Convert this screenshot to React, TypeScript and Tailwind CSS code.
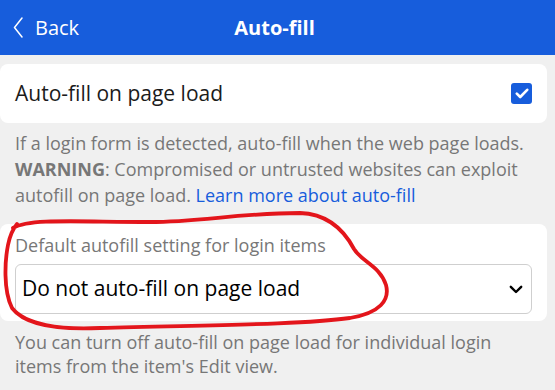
import React from "react";

export default function App() {
  return (
    <div
      className="relative w-[555px] h-[390px] overflow-hidden bg-[#f0f0f0]"
      style={{ fontFamily: '"Open Sans", "Noto Sans", sans-serif' }}
    >
      <header className="relative h-[55px] bg-[#175ddc] text-white flex items-center">
        <div className="flex items-center pl-[13px] gap-[12px]">
          <svg width="10" height="21" viewBox="0 0 10 21" fill="none">
            <path d="M9 1 L1.5 10.5 L9 20" stroke="white" strokeWidth="1.5" strokeLinecap="round" strokeLinejoin="round" />
          </svg>
          <span className="text-[20px] leading-none">Back</span>
        </div>
        <div className="absolute inset-0 flex items-center justify-center pointer-events-none">
          <span className="text-[20px] font-bold leading-none pr-[6px]">Auto-fill</span>
        </div>
      </header>

      <main className="pr-[8px] pt-[9px]">
        <div className="h-[59px] rounded-[8px] bg-white flex items-center justify-between pl-[15px] pr-[15px]">
          <span className="text-[21px] text-[#1b1b1b]">Auto-fill on page load</span>
          <div className="w-[21px] h-[21px] rounded-[3px] bg-[#175ddc] flex items-center justify-center">
            <svg width="14" height="11" viewBox="0 0 14 11" fill="none">
              <path d="M1.8 5.6 L5.2 9 L12.2 1.8" stroke="white" strokeWidth="2.6" strokeLinecap="round" strokeLinejoin="round" />
            </svg>
          </div>
        </div>

        <p className="mt-[7px] px-[15px] text-[18px] leading-[26px] text-[#777777]">
          If a login form is detected, auto-fill when the web page loads.{" "}
          <span className="font-bold">WARNING</span>: Compromised or untrusted websites can exploit autofill on page
          load. <span className="text-[#175ddc]">Learn more about auto-fill</span>
        </p>

        <div className="mt-[16px] rounded-[8px] bg-white px-[15px] pt-[10px] pb-[7px]">
          <div className="text-[18px] leading-[22px] text-[#777777]">Default autofill setting for login items</div>
          <div className="mt-[8px] h-[50px] rounded-[6px] border border-[#cfcfcf] flex items-center justify-between pl-[6px] pr-[8px]">
            <span className="text-[21px] text-black">Do not auto-fill on page load</span>
            <svg width="14" height="9" viewBox="0 0 14 9" fill="none">
              <path d="M1.8 1.8 L7 7 L12.2 1.8" stroke="black" strokeWidth="2.4" strokeLinecap="round" strokeLinejoin="round" />
            </svg>
          </div>
        </div>

        <p className="mt-[9px] px-[15px] pr-[40px] text-[18px] leading-[24px] text-[#777777]">
          You can turn off auto-fill on page load for individual login items from the item's Edit view.
        </p>
      </main>

      <svg className="absolute left-0 top-0 pointer-events-none" width="555" height="390" viewBox="0 0 555 390" fill="none">
        <path
          d="M 13 228 C 30 218, 80 222, 150 222 C 200 222, 240 213, 300 213 C 330 214, 345 232, 354 249 C 362 262, 380 266, 386 285 C 390 300, 380 313, 350 318 C 300 325, 200 325, 100 328 C 60 330, 25 325, 12 308 C 3 290, 5 260, 8 245 C 10 235, 12 230, 17 224"
          stroke="#e3151b"
          strokeWidth="3.8"
          strokeLinecap="round"
          strokeLinejoin="round"
        />
      </svg>
    </div>
  );
}
